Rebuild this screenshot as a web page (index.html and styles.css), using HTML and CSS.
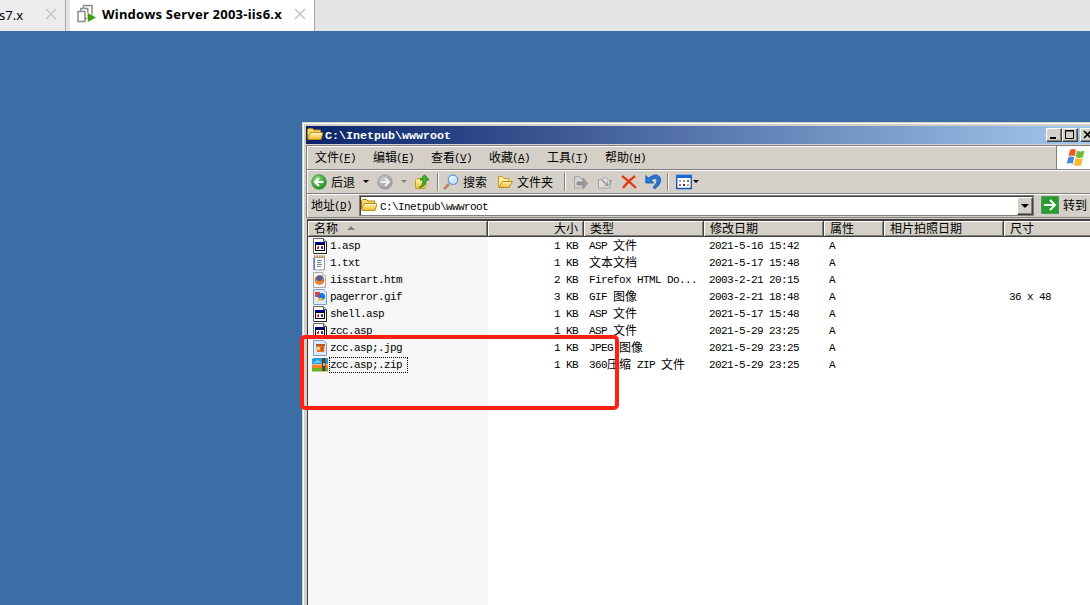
FILE: index.html
```
<!DOCTYPE html>
<html lang="zh-CN">
<head>
<meta charset="utf-8">
<title>wwwroot</title>
<link rel="stylesheet" href="styles.css">
</head>
<body>
<svg class="defs" width="0" height="0">
  <linearGradient id="gf" x1="0" y1="0" x2="0" y2="1"><stop offset="0" stop-color="#fff6b0"/><stop offset="1" stop-color="#eebb33"/></linearGradient>
  <radialGradient id="gg" cx=".35" cy=".3" r=".8"><stop offset="0" stop-color="#8fdc7c"/><stop offset="1" stop-color="#168a18"/></radialGradient>
  <radialGradient id="gs" cx=".35" cy=".3" r=".8"><stop offset="0" stop-color="#c8c8c8"/><stop offset="1" stop-color="#969696"/></radialGradient>
  <symbol id="folder" viewBox="0 0 16 16"><path d="M.5 11V2.500L1.500 1.500h4L7 3h6.500v2.500" fill="#f7d768" stroke="#b5820e"/><path d="M1 12.500V10L3.500 5.500h12v2L14 12.500z" fill="url(#gf)" stroke="#c08a14"/><path d="M4 6.500h10.500" stroke="#fffbe0"/></symbol>
  <symbol id="openfolder" viewBox="0 0 16 16"><path d="M1.500 13V2.500h4l1.500 2h5V7" fill="#ffec9a" stroke="#c99a22"/><path d="M2 13.500 5.500 7.500h10L12 13.500z" fill="url(#gf)" stroke="#c08a14"/></symbol>
  <symbol id="asp" viewBox="0 0 16 16"><path d="M1.500.500h10l3 3v12h-13z" fill="#fff" stroke="#666"/><path d="M14.500 4v11.500H2" fill="none" stroke="#222"/><path d="M11.500.500v3h3" fill="#ddd" stroke="#555"/><path d="M3 4h10v9H3z" fill="#000"/><path d="M3 4h10v2H3z" fill="#000090"/><path d="M4 7h8v5H4z" fill="#fff"/><path d="M5 9h2v2H5zM9 8h2v1H9z" fill="#e02020"/><path d="M9 9h2v2H9zM6 8h1v1H6z" fill="#1030c0"/></symbol>
  <symbol id="txt" viewBox="0 0 16 16"><path d="M2.500 2.500h10v12.500h-10z" fill="#fff" stroke="#929bb5"/><path d="M2 3v12" stroke="#6d72b8" stroke-width="1.500"/><path d="M2 1.500h11" stroke="#b5853c" stroke-width="2.500" stroke-dasharray="1.500 1"/><path d="M5 5.500h5M5 7.500h4M5 9.500h5M5 11.500h4" stroke="#6e8490"/></symbol>
  <symbol id="htm" viewBox="0 0 16 16"><path d="M1.500.500h9l3 3v12h-12z" fill="#f4f4f4" stroke="#aaa"/><path d="M10.500.500v3h3" fill="#fff" stroke="#bbb"/><circle cx="7.500" cy="8" r="4.700" fill="#d8501a"/><circle cx="8" cy="6.500" r="3" fill="#3566b0"/><path d="M3 6c1 3 3 3 6 3l2-3c1 4-1 6-4 6S3 10 3 6" fill="#ee851d"/></symbol>
  <symbol id="gif" viewBox="0 0 16 16"><path d="M1.500.500h10l3 3v12h-13z" fill="#dceaff" stroke="#7e9bcd"/><path d="M3 3h5v5H3z" fill="#ed4224"/><circle cx="9.500" cy="7.500" r="3.500" fill="#1675df"/><path d="M6 9h5l-2 3H6z" fill="#f6c52f"/></symbol>
  <symbol id="jpg" viewBox="0 0 16 16"><path d="M1.500.500h10l3 3v12h-13z" fill="#dceaff" stroke="#7e9bcd"/><path d="M4 4h9l-1 8H5z" fill="#e9771d"/><path d="M4 4h9v2H4z" fill="#ad5a35"/><path d="M5 7h3v3H5z" fill="#ffd385"/><path d="M9 7h2v4H9z" fill="#b95224"/></symbol>
  <symbol id="zip" viewBox="0 0 16 16"><path d="M0 2 2 1h14v6H0z" fill="#209be5"/><path d="m0 6 6-3 4 3z" fill="#79caf7"/><path d="M0 7.500h16V11H0z" fill="#ee842b"/><path d="M0 11h16v3.500H0z" fill="#68b422"/><path d="M10 1h3.500v13H10z" fill="#653d26"/><path d="M11 6h2v3h-2z" fill="#ccad83"/></symbol>
</svg>

<header class="tabs">
  <div class="tab tab-old"><span>s7.x</span><svg class="close" viewBox="0 0 12 12"><path d="m1 1 10 10M11 1 1 11"/></svg></div>
  <div class="tab tab-active">
    <svg class="vm" viewBox="0 0 20 20"><g fill="#fff" stroke="#8c8c8c" stroke-width="1.500"><path d="M6.500 1.500h8.500v11H6.500z"/><path d="M3.800 4.500h7v10h-7z"/><path d="M1 7.500h7v10H1z"/></g><path d="M10.500 8.500v10l9-5z" fill="#3f9c12" stroke="#fff" stroke-width=".6"/></svg>
    <b>Windows Server 2003-iis6.x</b><svg class="close" viewBox="0 0 12 12"><path d="m1 1 10 10M11 1 1 11"/></svg>
  </div>
</header>

<main class="desktop">
  <section class="window">
    <div class="titlebar"><svg class="i16"><use href="#folder"/></svg><b>C:\Inetpub\wwwroot</b>
      <div class="buttons"><i><svg viewBox="0 0 14 12"><path d="M3 9h6" stroke-width="2"/></svg></i><i><svg viewBox="0 0 14 12"><path d="M2.500 1.500h8v8h-8zM2 2h9"/></svg></i><i class="x"><svg viewBox="0 0 14 12"><path d="m3 2 7 7M10 2 3 9" stroke-width="1.600"/></svg></i></div>
    </div>
    <div class="client">
      <div class="menurow">
        <nav><span>文件<s>(<u>F</u>)</s></span><span>编辑<s>(<u>E</u>)</s></span><span>查看<s>(<u>V</u>)</s></span><span>收藏<s>(<u>A</u>)</s></span><span>工具<s>(<u>T</u>)</s></span><span>帮助<s>(<u>H</u>)</s></span></nav>
        <div class="flag"><svg width="20" height="20" viewBox="0 0 20 20"><path d="M4 2q3-2 6 0L8.500 8.500q-3-2-6 0z" fill="#e8582a"/><path d="M11 2.500q3 2 7.500 0L17 9q-4 2-7.500 0z" fill="#76b83a"/><path d="M2.200 9.500q3-2 6 0L6.700 16q-3-2-6 0z" fill="#4a83dc"/><path d="M9.500 10q3 2 7.300 0L15.300 17q-4 2-7.300 0z" fill="#f4bd2c"/></svg></div>
      </div>
      <div class="toolbar">
        <svg class="i16" viewBox="0 0 16 16"><circle cx="8" cy="8" r="7.300" fill="url(#gg)" stroke="#24862a" stroke-width=".7"/><path d="M12.500 8H4M8 4 4 8l4 4" fill="none" stroke="#fff" stroke-width="2"/></svg>
        <span class="t-back">后退</span><em class="caret"></em>
        <svg class="i16 fwd" viewBox="0 0 16 16"><circle cx="8" cy="8" r="7.300" fill="url(#gs)" stroke="#999" stroke-width=".7"/><path d="M3.500 8H12M8 4l4 4-4 4" fill="none" stroke="#eee" stroke-width="2"/></svg>
        <em class="caret dim"></em>
        <svg class="i16 up" viewBox="0 0 16 16"><path d="M1.500 14.500V6L3 4.500h4l1 1h4v6l-1.500 3z" fill="url(#gf)" stroke="#c79a26"/><path d="M5 13.500q4-1 4-7.500H6L10.500.8 15 6h-3q0 6.500-7 7.500" fill="#37b427" stroke="#187914" stroke-width=".8"/></svg>
        <hr>
        <svg class="i16 search" viewBox="0 0 16 16"><path d="m1 15 5-5" stroke="#b98365" stroke-width="2.500"/><circle cx="10" cy="5.700" r="4.700" fill="#c9edff" stroke="#7596d3" stroke-width="1.300"/><path d="M7 6q0-3 3-3" fill="none" stroke="#fff" stroke-width="1.500"/></svg>
        <span class="t-search">搜索</span>
        <svg class="i16 fold"><use href="#openfolder"/></svg><span class="t-fold">文件夹</span>
        <hr class="h2">
        <svg class="i16 mv" viewBox="0 0 16 16"><path d="M1.500 14V2.500h5l1 2h4V14z" fill="#d5d5d1" stroke="#a5a5a1"/><path d="M4 8h6V5l5 4.500L10 14v-3H4z" fill="#999" stroke="#858585" stroke-width=".7"/></svg>
        <svg class="i16 cp" viewBox="0 0 16 16"><path d="M1.500 14V5.500h3L8 3l5 4v7z" fill="#dededb" stroke="#a5a5a1"/><path d="m5 5 5 5V6l2 6H6l3-1-5-5zM13 6h2l-2 6" fill="#999"/></svg>
        <svg class="i16 del" viewBox="0 0 16 16"><path d="M1 2q7 5 14 12M14 2Q7 7 2 14" fill="none" stroke="#e23a13" stroke-width="2.200"/></svg>
        <svg class="i16 undo" viewBox="0 0 16 16"><path d="M.8 1.500V9h8L6.300 6.500Q9 3.500 11 4.500q3 3-3 8.500l1.500 2Q17 10 15.300 4q-2.500-5-8.500-2L3.500 4z" fill="#2876dd" stroke="#0e4ba6" stroke-width=".7"/></svg>
        <hr class="h3">
        <svg class="i16 view" viewBox="0 0 16 16"><path d="M.7 1.500h14.600v13H.7z" fill="#fff" stroke="#1555bd" stroke-width="1.400"/><path d="M0 1h16v3H0z" fill="#1767d7"/><path d="M3 6h2v2H3zM7 6h2v2H7z" fill="#9999ba"/><path d="M11 6h2v2h-2z" fill="#33963b"/><path d="M3 10h2v2H3z" fill="#e65529"/><path d="M7 10h2v2H7z" fill="#153b9a"/><path d="M11 10h2v2h-2z" fill="#e4a32b"/></svg>
        <em class="caret c3"></em>
      </div>
      <div class="address"><label>地址<s>(<u>D</u>)</s></label>
        <div class="field"><svg class="i16"><use href="#folder"/></svg><s>C:\Inetpub\wwwroot</s><i class="drop"><em class="caret"></em></i></div>
        <svg class="go" viewBox="0 0 18 18"><path d="M.5.500h17v17H.5z" fill="#269c32" stroke="#56955b"/><path d="M3 9h11M9 4l5 5-5 5" fill="none" stroke="#fff" stroke-width="2"/></svg><span>转到</span>
      </div>
      <div class="list">
        <div class="row head"><span>名称<em class="sort"></em></span><span class="r">大小</span><span>类型</span><span>修改日期</span><span>属性</span><span>相片拍照日期</span><span>尺寸</span></div>
        <div class="row"><span class="n"><svg class="i16"><use href="#asp"/></svg><s>1.asp</s></span><span class="r"><s>1 KB</s></span><span><s>ASP </s>文件</span><span><s>2021-5-16 15:42</s></span><span><s>A</s></span></div>
        <div class="row"><span class="n"><svg class="i16"><use href="#txt"/></svg><s>1.txt</s></span><span class="r"><s>1 KB</s></span><span>文本文档</span><span><s>2021-5-17 15:48</s></span><span><s>A</s></span></div>
        <div class="row"><span class="n"><svg class="i16"><use href="#htm"/></svg><s>iisstart.htm</s></span><span class="r"><s>2 KB</s></span><span><s>Firefox HTML Do...</s></span><span><s>2003-2-21 20:15</s></span><span><s>A</s></span></div>
        <div class="row"><span class="n"><svg class="i16"><use href="#gif"/></svg><s>pagerror.gif</s></span><span class="r"><s>3 KB</s></span><span><s>GIF </s>图像</span><span><s>2003-2-21 18:48</s></span><span><s>A</s></span><span></span><span><s>36 x 48</s></span></div>
        <div class="row"><span class="n"><svg class="i16"><use href="#asp"/></svg><s>shell.asp</s></span><span class="r"><s>1 KB</s></span><span><s>ASP </s>文件</span><span><s>2021-5-17 15:48</s></span><span><s>A</s></span></div>
        <div class="row"><span class="n"><svg class="i16"><use href="#asp"/></svg><s>zcc.asp</s></span><span class="r"><s>1 KB</s></span><span><s>ASP </s>文件</span><span><s>2021-5-29 23:25</s></span><span><s>A</s></span></div>
        <div class="row"><span class="n"><svg class="i16"><use href="#jpg"/></svg><s>zcc.asp;.jpg</s></span><span class="r"><s>1 KB</s></span><span><s>JPEG </s>图像</span><span><s>2021-5-29 23:25</s></span><span><s>A</s></span></div>
        <div class="row"><span class="n"><svg class="i16"><use href="#zip"/></svg><s class="focus">zcc.asp;.zip</s></span><span class="r"><s>1 KB</s></span><span><s>360</s>压缩<s> ZIP </s>文件</span><span><s>2021-5-29 23:25</s></span><span><s>A</s></span></div>
      </div>
    </div>
  </section>
  <div class="marker"></div>
</main>
</body>
</html>
```
FILE: styles.css
```
* { box-sizing: border-box; }
body { margin: 0; width: 1090px; height: 605px; overflow: hidden; display: flex; flex-direction: column; font: 12px/16px "Noto Sans CJK SC", sans-serif; color: #000; }
.defs { position: absolute; }
svg { display: block; flex: none; }
i, em { font-style: normal; display: block; flex: none; }
s { font: 11px/14px "Liberation Mono", monospace; letter-spacing: -0.6px; text-decoration: none; white-space: pre; vertical-align: 1px; }
.tabs { height: 31px; flex: none; display: flex; background: #e3e4e6; font: 13px/18px "DejaVu Sans Condensed", "DejaVu Sans", sans-serif; }
.tab { display: flex; align-items: center; height: 31px; padding-bottom: 3px; border-right: 1px solid #a9a9a9; }
.tab-old { width: 66px; background: #ececee; justify-content: space-between; padding-right: 8px; }
.tab-old span { margin-left: -1px; padding-top: 1px; font-family: "Noto Sans", sans-serif; }
.tab-active { width: 245px; margin-left: 4px; background: #fff; padding-left: 7px; }
.tab-active b { width: 180px; margin-left: 5px; white-space: nowrap; font-family: "Noto Sans", sans-serif; letter-spacing: 0.23px; }
.vm { width: 20px; height: 20px; }
.close { width: 12px; height: 12px; fill: none; stroke: #c6c6c6; stroke-width: 1.6; }
.tab-active .close { margin-left: 12px; }

.desktop { position: relative; flex: 1; background: #3a6ea5; overflow: hidden; }
.window { position: absolute; left: 302px; top: 91px; width: 800px; height: 530px; padding: 2px 0 0 2px; background: #d4d0c8; border: 1px solid #d4d0c8; box-shadow: inset 1px 1px #fff; }
.titlebar { height: 18px; margin: 1px 0 0 1px; padding: 0 2px 0 1px; display: flex; align-items: center; background: linear-gradient(90deg, #0a246a, #a6caf0); color: #fff; }
.titlebar b { font: bold 11.67px/16px "Liberation Mono", monospace; margin-left: 2px; padding-top: 1px; }
.buttons { display: flex; margin-left: auto; margin-right: 3px; }
.buttons i { width: 16px; height: 14px; background: #d4d0c8; border: 1px solid; border-color: #fff #404040 #404040 #fff; box-shadow: inset -1px -1px #808080; }
.buttons .x { margin-left: 2px; }
.buttons svg { width: 14px; height: 12px; fill: none; stroke: #000; }

.client { margin-left: 1px; }
.menurow { height: 25px; margin-top: 1px; display: flex; border-top: 1px solid #808080; border-bottom: 1px solid #808080; border-left: 1px solid #808080; box-shadow: inset 1px 1px #fff; }
.menurow nav { width: 750px; display: flex; padding: 3px 0 0 8px; border-right: 1px solid #808080; }
.menurow nav span { width: 58px; white-space: nowrap; }
.menurow s, .address label s { margin-left: -1px; }
.flag { flex: 1; background: #fff; padding: 2px 0 0 9px; }
.toolbar { height: 24px; display: flex; align-items: center; padding-left: 4px; border: solid #808080; border-width: 0 0 1px 1px; box-shadow: inset 1px 1px #fff; }
.i16 { width: 16px; height: 16px; }
.toolbar span { line-height: 16px; white-space: nowrap; }
.toolbar hr { width: 2px; height: 18px; margin: 0 0 0 7px; border: 0; border-left: 1px solid #808080; background: #fff; }
.t-back { margin-left: 4px; width: 24px; }
.caret { width: 0; height: 0; border: 3px solid transparent; border-top-color: #000; border-bottom: 0; margin-left: 8px; }
.fwd { margin-left: 8px; }
.caret.dim { border-top-color: #808080; margin-left: 8px; }
.up { margin-left: 7px; }
.toolbar .search { margin-left: 4px; }
.t-search, .t-fold { margin-left: 4px; }
.fold { margin-left: 10px; }
.toolbar .h2 { margin-left: 11px; }
.mv { margin-left: 7px; }
.cp, .del, .undo { margin-left: 8px; }
.toolbar .h3 { margin-left: 6px; }
.view { margin-left: 7px; }
.caret.c3 { margin-left: 1px; }
.address { height: 24px; display: flex; border-left: 1px solid #808080; border-bottom: 1px solid #808080; box-shadow: inset 1px 1px #fff; padding: 1px 0 1px 4px; white-space: nowrap; }
.address label { width: 48px; padding-top: 2px; }
.field { width: 675px; height: 21px; display: flex; align-items: center; background: #fff; border: 1px solid #808080; box-shadow: inset 1px 1px #404040; padding-left: 1px; }
.field s { margin-left: 3px; padding-top: 2px; }
.drop { width: 16px; height: 18px; margin-left: auto; background: #d4d0c8; border: 1px solid; border-color: #fff #404040 #404040 #fff; box-shadow: inset -1px -1px #808080; }
.drop .caret { margin: 6px 0 0 3px; border-width: 4px 4px 0; }
.go { width: 18px; height: 18px; margin: 1px 4px 0 7px; }
.address > span { padding-top: 2px; }

.list { margin-top: 1px; height: 400px; border: solid #404040; border-width: 2px 0 0 1px; margin-left: 1px; background: linear-gradient(90deg, #f7f7f7 180px, #fff 180px); }
.row { height: 17px; display: grid; grid-template-columns: 180px 96px 120px 120px 60px 120px 100px; line-height: 16px; white-space: nowrap; }
.row span { padding-left: 5px; height: 17px; }
.row:not(.head) span:not(.n) { line-height: 15px; }
.row .r { text-align: right; padding: 0 6px 0 0; }
.row .n { display: flex; align-items: center; padding-left: 4px; }
.row .n s { margin-left: 1px; padding: 0 1px; line-height: 16px; }
.head { height: 16px; background: #d4d0c8; }
.head span { height: 16px; border: solid #404040; border-width: 0 1px 1px 0; box-shadow: inset 1px 1px #fff, inset -1px -1px #808080; display: flex; align-items: center; line-height: 14px; padding: 0 0 1px 6px; }
.head .r { justify-content: flex-end; padding: 0 5px 1px 0; }
.sort { width: 0; height: 0; border: 4px solid transparent; border-top: 0; border-bottom-color: #808080; margin-left: 9px; }
.row .n .focus { outline: 1px dotted #000; outline-offset: -1px; padding-right: 6px; }
.marker { position: absolute; left: 300px; top: 304px; width: 319px; height: 75px; border: 4px solid #ff2013; border-radius: 5px; }
```
